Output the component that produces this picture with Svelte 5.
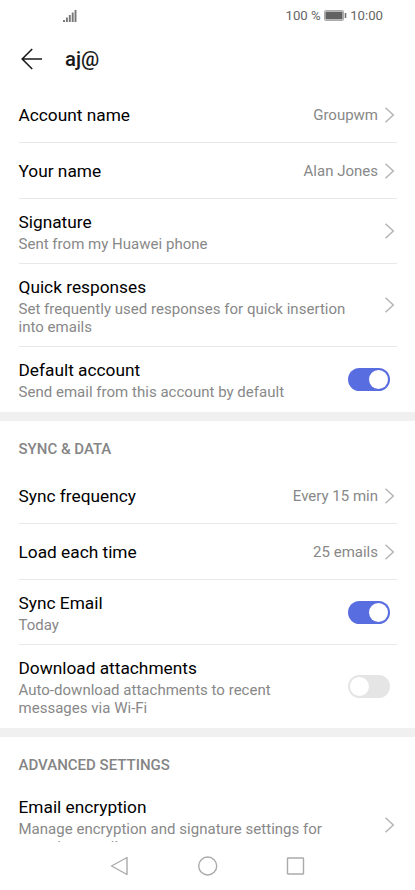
<script>
  let sections = $state([
    {
      title: "",
      rows: [
        { label: "Account name", value: "Groupwm" },
        { label: "Your name", value: "Alan Jones" },
        { label: "Signature", lines: ["Sent from my Huawei phone"] },
        { label: "Quick responses", lines: ["Set frequently used responses for quick insertion", "into emails"] },
        { label: "Default account", lines: ["Send email from this account by default"], on: true }
      ]
    },
    {
      title: "SYNC & DATA",
      rows: [
        { label: "Sync frequency", value: "Every 15 min" },
        { label: "Load each time", value: "25 emails" },
        { label: "Sync Email", lines: ["Today"], on: true },
        { label: "Download attachments", lines: ["Auto-download attachments to recent", "messages via Wi-Fi"], on: false }
      ]
    },
    {
      title: "ADVANCED SETTINGS",
      rows: [
        { label: "Email encryption", lines: ["Manage encryption and signature settings for", "outgoing emails"] }
      ]
    }
  ]);

  const isSwitch = (row) => row.on !== undefined;
</script>

<div class="screen">
  <div class="status">
    <svg class="signal" width="14" height="12" viewBox="0 0 14 12">
      <path d="M1 12v-2M3.900 12V7.500M6.800 12V5M9.700 12V2.500M12.500 12V0" />
    </svg>
    <span class="percent">100 %</span>
    <svg class="battery" width="23" height="11" viewBox="0 0 23 11">
      <rect x="0.500" y="0.500" width="19" height="10" rx="1" fill="#ddd" stroke="#aaa" />
      <rect x="1.500" y="1.700" width="17" height="7.600" fill="#626262" />
      <rect x="20.700" y="3" width="1.600" height="5" fill="#707070" />
    </svg>
    <span>10:00</span>
  </div>

  <header>
    <button class="back" aria-label="Back">
      <svg width="22" height="22" viewBox="0 0 22 22">
        <path d="M21 11H1.200M11.200 1L1.200 11l10 10" />
      </svg>
    </button>
    <h1>aj@</h1>
  </header>

  <main>
    {#each sections as section}
      <section>
        {#if section.title}
          <h2>{section.title}</h2>
        {/if}
        {#each section.rows as row}
          <div class="row" class:tall={row.lines} class:double={row.lines?.length > 1}>
            <div class="text">
              <div class="label">{row.label}</div>
              {#each row.lines ?? [] as line}
                <div class="line">{line}</div>
              {/each}
            </div>
            {#if row.value}
              <span class="value">{row.value}</span>
            {/if}
            {#if isSwitch(row)}
              <button
                class="switch"
                class:on={row.on}
                role="switch"
                aria-checked={row.on}
                aria-label={row.label}
                onclick={() => (row.on = !row.on)}
              >
                <span class="knob"></span>
              </button>
            {:else}
              <svg class="chevron" width="10" height="16" viewBox="0 0 10 16">
                <path d="M0.500 0.700L8.300 8L0.500 15.300" />
              </svg>
            {/if}
          </div>
        {/each}
      </section>
    {/each}
  </main>

  <nav>
    <svg width="20" height="20" viewBox="0 0 20 20">
      <path d="M17 1.500v17L1.500 10z" />
    </svg>
    <svg width="20" height="20" viewBox="0 0 20 20">
      <circle cx="9.700" cy="10" r="9" />
    </svg>
    <svg width="20" height="20" viewBox="0 0 20 20">
      <rect x="1.500" y="2" width="16" height="16" rx="0.500" />
    </svg>
  </nav>
</div>

<style>
  :global(body) {
    margin: 0;
    background: #fff;
  }

  .screen {
    display: flex;
    flex-direction: column;
    width: 415px;
    height: 890px;
    overflow: hidden;
    background: #fff;
    color: #000;
    font-family: Roboto, "Noto Sans", sans-serif;
  }

  .status {
    display: flex;
    align-items: center;
    height: 31px;
    padding: 0 32px 0 63px;
    box-sizing: border-box;
    font-size: 13.2px;
    color: #666;
  }

  .signal {
    fill: none;
    stroke: #777;
    stroke-width: 1.9;
  }

  .percent {
    margin-left: auto;
  }

  .battery {
    margin: 0 3.5px 0 3px;
  }

  header {
    display: flex;
    align-items: center;
    height: 56px;
    padding-left: 21px;
  }

  button {
    padding: 0;
    border: none;
    background: none;
    cursor: pointer;
  }

  .back {
    display: flex;
  }

  .back svg {
    fill: none;
    stroke: #1a1a1a;
    stroke-width: 1.6;
  }

  h1 {
    margin: 0 0 0 22px;
    font-size: 20.3px;
    font-weight: 500;
    color: #1a1a1a;
  }

  main {
    height: 755px;
    overflow: hidden;
  }

  section + section {
    border-top: 9px solid #f0f0f0;
  }

  h2 {
    display: flex;
    align-items: center;
    height: 47px;
    margin: 0;
    padding: 8px 18px 0 18.5px;
    box-sizing: border-box;
    font-size: 15px;
    font-weight: 500;
    color: #858585;
  }

  .row {
    display: flex;
    align-items: center;
    height: 56px;
    margin: 0 18.5px;
    padding-right: 2px;
    box-sizing: border-box;
    border-bottom: 1px solid #e8e8e8;
  }

  .row.tall {
    height: 65px;
  }

  .row.double {
    height: 83px;
  }

  .row:last-child {
    border-bottom-color: transparent;
  }

  .text {
    flex: 1;
    white-space: nowrap;
  }

  .label {
    font-size: 17.3px;
    line-height: 24px;
  }

  .line {
    font-size: 15px;
    line-height: 18px;
    letter-spacing: 0.02px;
    color: #888;
  }

  /* extra space under the label without moving the label itself */
  .label + .line {
    margin-top: 1px;
  }

  .line:last-child {
    margin-bottom: -1px;
  }

  .value {
    margin-right: 6.5px;
    padding-top: 1px;
    font-size: 15px;
    color: #888;
  }

  .chevron {
    fill: none;
    stroke: #b5b5b5;
    stroke-width: 1.5;
  }

  .switch {
    display: flex;
    align-items: center;
    width: 42px;
    height: 23px;
    margin-right: 4.5px;
    padding: 0 2px;
    box-sizing: border-box;
    border-radius: 12px;
    background: #e5e5e5;
  }

  .switch.on {
    justify-content: flex-end;
    background: #586ddf;
  }

  .knob {
    width: 19px;
    height: 19px;
    border-radius: 50%;
    background: #fff;
  }

  nav {
    display: flex;
    align-items: center;
    justify-content: center;
    gap: 68px;
    height: 48px;
  }

  nav svg {
    fill: none;
    stroke: #aaa;
    stroke-width: 1.4;
    stroke-linejoin: round;
  }
</style>
